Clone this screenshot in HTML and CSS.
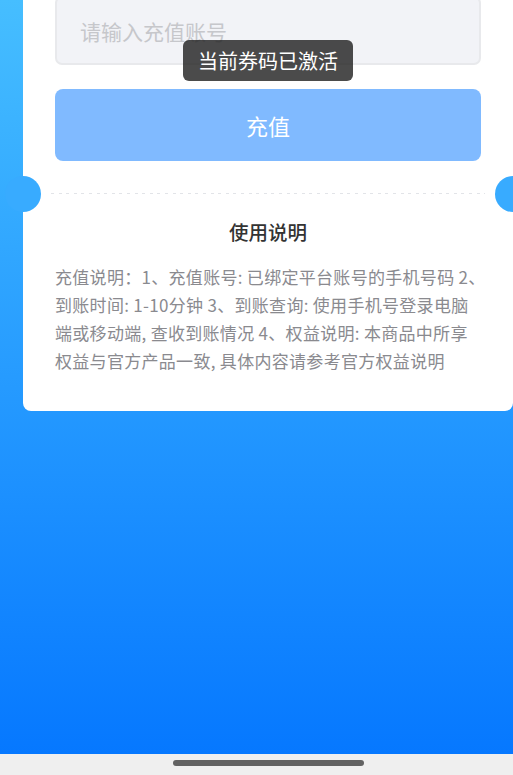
FILE: index.html
```html
<!DOCTYPE html>
<html lang="zh-CN">
<head>
<meta charset="utf-8">
<title>充值</title>
<link rel="stylesheet" href="styles.css">
</head>
<body>
<div class="viewport">
  <div class="page">
    <div class="card">
      <input class="account" type="text" placeholder="请输入充值账号">
      <button class="submit" type="button">充值</button>
      <div class="divider"></div>
      <h2 class="title">使用说明</h2>
      <p class="desc"><span class="line">充值说明：1、充值账号: 已绑定平台账号的手机号码 2、</span><span class="line">到账时间: 1-10分钟 3、到账查询: 使用手机号登录电脑</span><span class="line">端或移动端, 查收到账情况 4、权益说明: 本商品中所享</span><span class="line">权益与官方产品一致, 具体内容请参考官方权益说明</span></p>
    </div>
  </div>
  <div class="home-bar"><span class="indicator"></span></div>
  <div class="toast">当前券码已激活</div>
</div>
</body>
</html>
```

FILE: styles.css
```css
* { box-sizing: border-box; }
html, body { margin: 0; padding: 0; }
body {
  font-family: "Noto Sans CJK SC", "Noto Sans", sans-serif;
  overflow: hidden;
}
.viewport {
  position: relative;
  width: 513px;
  height: 775px;
  overflow: hidden;
  display: flex;
  flex-direction: column;
}
.page {
  flex: none;
  width: 536px;
  height: 754px;
  display: flex;
  flex-direction: column;
  background: linear-gradient(180deg, #46beff 0%, #0678ff 100%);
}
.card {
  margin: -36px 23px 0;
  padding: 32px 32px 35px;
  background: #fff;
  border-radius: 8px;
  display: flex;
  flex-direction: column;
}
.account {
  display: block;
  width: 100%;
  height: 69px;
  margin: 0;
  padding: 0 0 0 23px;
  border: 2px solid #e8e9ec;
  border-radius: 7px;
  background: #f2f3f7;
  font-family: inherit;
  font-size: 21px;
  color: #333;
  outline: none;
}
.account::placeholder { color: #c6c7cb; }
.submit {
  display: block;
  width: 100%;
  height: 72px;
  margin: 24px 0 0;
  border: none;
  border-radius: 8px;
  background: #80baff;
  color: #fff;
  font-family: inherit;
  font-size: 22px;
  padding: 0;
}
.divider {
  position: relative;
  height: 1px;
  margin: 32px -4px 0;
  background: repeating-linear-gradient(90deg, #e2e4e8 0 3px, transparent 3px 7.6px);
}
.divider::before,
.divider::after {
  content: "";
  position: absolute;
  top: -17.5px;
  width: 36px;
  height: 36px;
  border-radius: 50%;
  background: #38abff;
}
.divider::before { left: -46px; }
.divider::after { right: -46px; }
.title {
  margin: 24px 0 0;
  font-size: 19.5px;
  line-height: 28px;
  font-weight: 500;
  color: #333;
  text-align: center;
}
.desc {
  margin: 16.5px 0 0;
  font-size: 17px;
  line-height: 28.3px;
  color: #8a8a8f;
  letter-spacing: 0.3px;
}
.line {
  display: block;
  white-space: nowrap;
}
.home-bar {
  flex: none;
  width: 536px;
  height: 21px;
  background: #efefef;
  display: flex;
  justify-content: center;
  padding-top: 6px;
}
.indicator {
  width: 191px;
  height: 6px;
  border-radius: 3px;
  background: #626262;
}
.toast {
  position: absolute;
  top: 40px;
  left: 268px;
  transform: translateX(-50%);
  height: 41px;
  padding: 0 15px;
  border-radius: 6px;
  background: rgba(30, 30, 30, 0.8);
  color: #fff;
  font-size: 20px;
  line-height: 41px;
  white-space: nowrap;
}
```
